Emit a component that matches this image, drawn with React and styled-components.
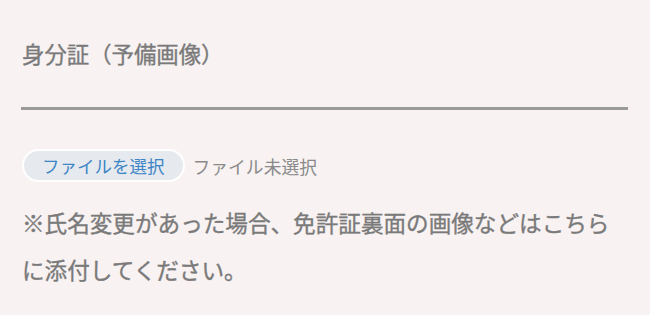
import React from "react";
import styled, { createGlobalStyle } from "styled-components";

const GlobalStyle = createGlobalStyle`
  html, body {
    margin: 0;
    padding: 0;
    background: #f8f2f2;
  }
  body {
    font-family: "Noto Sans CJK JP", "Noto Sans", sans-serif;
  }
`;

const Page = styled.div`
  width: 650px;
  height: 315px;
  box-sizing: border-box;
  padding: 35px 22px 0 22px;
  background: #f8f2f2;
  overflow: hidden;
`;

const FieldLabel = styled.div`
  font-size: 22.4px;
  font-weight: 400;
  -webkit-text-stroke: 0.35px #7a7a7a;
  color: #7a7a7a;
  line-height: 36px;
`;

const Underline = styled.div`
  height: 3px;
  width: 607px;
  margin: 36px 0 0 -1px;
  background: #9a9a9a;
`;

const FileRow = styled.div`
  display: flex;
  align-items: center;
  gap: 8px;
  margin-top: 39px;
`;

const PickButton = styled.button`
  height: 33px;
  padding: 0 18px;
  border: 2px solid #ffffff;
  border-radius: 17px;
  background: #e6e9ee;
  color: #3d86c6;
  font-family: inherit;
  font-size: 17.5px;
  line-height: 1;
  cursor: pointer;
`;

const FileStatus = styled.span`
  font-size: 17.8px;
  color: #8a8a8a;
`;

const Note = styled.p`
  margin: 17px 0 0 0;
  font-size: 22.6px;
  font-weight: 400;
  -webkit-text-stroke: 0.35px #7a7a7a;
  line-height: 47px;
  color: #7a7a7a;
`;

export default function App() {
  return (
    <>
      <GlobalStyle />
      <Page>
        <FieldLabel>身分証（予備画像）</FieldLabel>
        <Underline />
        <FileRow>
          <PickButton>ファイルを選択</PickButton>
          <FileStatus>ファイル未選択</FileStatus>
        </FileRow>
        <Note>
          ※氏名変更があった場合、免許証裏面の画像などはこちら
          <br />
          に添付してください。
        </Note>
      </Page>
    </>
  );
}
